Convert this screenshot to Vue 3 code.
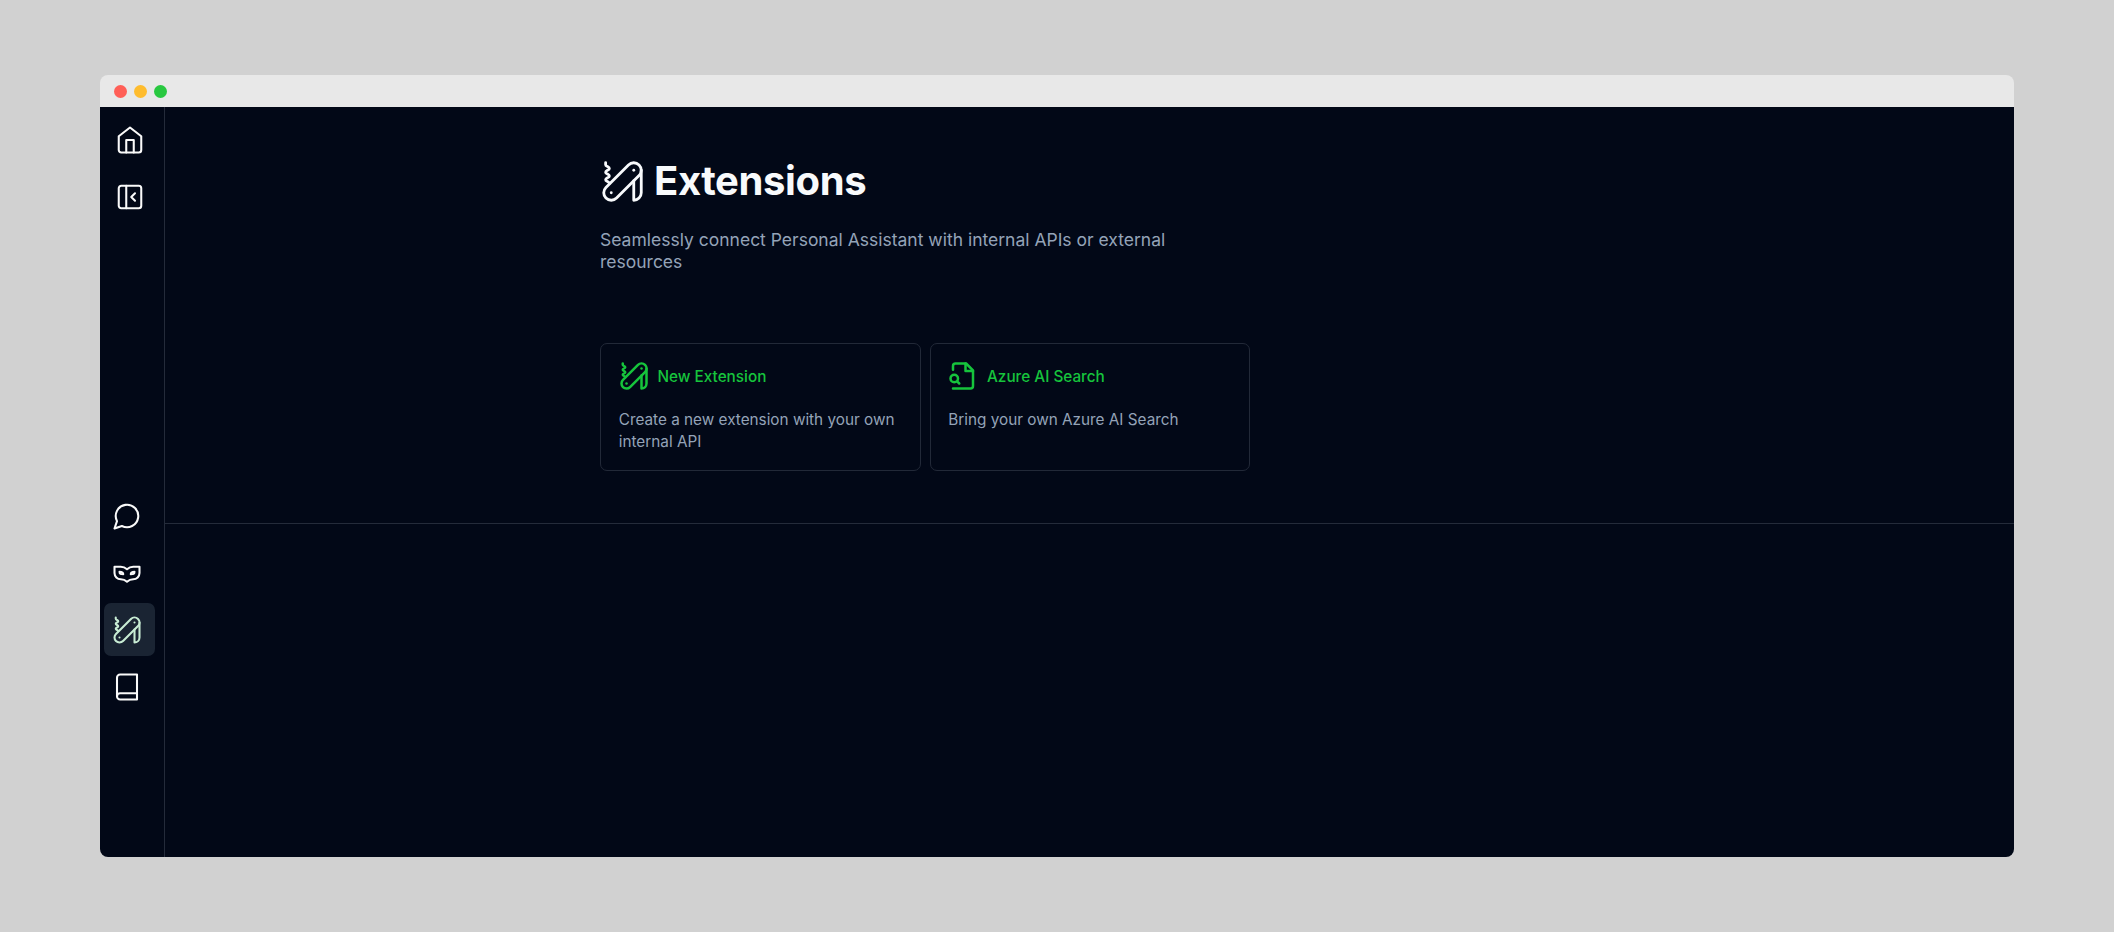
<script setup>
const knife = [
  'M3 2v1c0 1 2 1 2 2S3 6 3 7s2 1 2 2-2 1-2 2 2 1 2 2',
  'M18 6h.01',
  'M6 18h.01',
  'M20.83 8.83a4 4 0 0 0-5.66-5.66l-12 12a4 4 0 1 0 5.66 5.66Z',
  'M18 11.66V22a4 4 0 0 0 4-4V6',
]
const fileSearch = [
  'M4 22h14a2 2 0 0 0 2-2V7.5L14.5 2H6a2 2 0 0 0-2 2v3',
  'M14 2v6h6',
  'M5 17a3 3 0 1 0 0-6 3 3 0 0 0 0 6z',
  'm9 18-1.5-1.5',
]
const topNav = [
  { name: 'Home', paths: ['m3 9 9-7 9 7v11a2 2 0 0 1-2 2H5a2 2 0 0 1-2-2z', 'M9 22V12h6v10'] },
  { name: 'Collapse', paths: ['M5 3h14a2 2 0 0 1 2 2v14a2 2 0 0 1-2 2H5a2 2 0 0 1-2-2V5a2 2 0 0 1 2-2z', 'M9 3v18', 'm16 15-3-3 3-3'] },
]
const mainNav = [
  { name: 'Chat', paths: ['M7.9 20A9 9 0 1 0 4 16.1L2 22Z'] },
  {
    name: 'Persona',
    paths: [
      'M2 12a5 5 0 0 0 5 5 8 8 0 0 1 5 2 8 8 0 0 1 5-2 5 5 0 0 0 5-5V7h-5a8 8 0 0 0-5 2 8 8 0 0 0-5-2H2Z',
      'M6 11c1.5 0 3 .5 3 2-2 0-3 0-3-2Z',
      'M18 11c-1.5 0-3 .5-3 2 2 0 3 0 3-2Z',
    ],
  },
  { name: 'Extensions', paths: knife, active: true },
  { name: 'Prompts', paths: ['M4 19.5v-15A2.5 2.5 0 0 1 6.5 2H20v20H6.5a2.5 2.5 0 0 1 0-5H20'] },
]
const cards = [
  { title: 'New Extension', text: 'Create a new extension with your own internal API', paths: knife },
  { title: 'Azure AI Search', text: 'Bring your own Azure AI Search', paths: fileSearch },
]
</script>

<template>
  <div class="desktop">
    <div class="window">
      <div class="titlebar">
        <span class="dot red"></span>
        <span class="dot yellow"></span>
        <span class="dot green"></span>
      </div>
      <div class="body">
        <nav class="sidebar">
          <div class="group top">
            <a v-for="item in topNav" :key="item.name" class="item" :aria-label="item.name">
              <svg class="icon" viewBox="0 0 24 24"><path v-for="d in item.paths" :key="d" :d="d" /></svg>
            </a>
          </div>
          <div class="group main">
            <a v-for="item in mainNav" :key="item.name" class="item" :class="{ active: item.active }" :aria-label="item.name">
              <svg class="icon" viewBox="0 0 24 24"><path v-for="d in item.paths" :key="d" :d="d" /></svg>
            </a>
          </div>
        </nav>
        <main class="content">
          <header class="hero">
            <div class="inner">
              <h1 class="title">
                <svg class="icon large" viewBox="0 0 24 24"><path v-for="d in knife" :key="d" :d="d" /></svg>
                <span>Extensions</span>
              </h1>
              <p class="subtitle">Seamlessly connect Personal Assistant with internal APIs or external resources</p>
              <div class="cards">
                <article v-for="card in cards" :key="card.title" class="card">
                  <h2 class="card-title">
                    <svg class="icon bold" viewBox="0 0 24 24"><path v-for="d in card.paths" :key="d" :d="d" /></svg>
                    <span>{{ card.title }}</span>
                  </h2>
                  <p class="card-text">{{ card.text }}</p>
                </article>
              </div>
            </div>
          </header>
        </main>
      </div>
    </div>
  </div>
</template>

<style>
body {
  background: #d1d1d1;
}
</style>

<style scoped>
.desktop {
  box-sizing: border-box;
  height: 932px;
  padding: 75px 100px;
  background: #d1d1d1;
  font-family: Inter, 'Liberation Sans', sans-serif;
}
.window {
  display: flex;
  flex-direction: column;
  height: 782px;
}
.titlebar {
  display: flex;
  align-items: center;
  gap: 7px;
  flex: none;
  height: 32px;
  padding: 1px 13.5px 0;
  box-sizing: border-box;
  border-radius: 8px 8px 0 0;
  background: #e8e8e8;
}
.dot {
  width: 13px;
  height: 13px;
  border-radius: 50%;
}
.red { background: #ff5f57; }
.yellow { background: #febc2e; }
.green { background: #28c840; }
.body {
  display: flex;
  flex: 1;
  border-radius: 0 0 8px 8px;
  background: #020817;
}
.sidebar {
  display: flex;
  flex-direction: column;
  flex: none;
  width: 64px;
  border-right: 1px solid #242b3a;
}
.group {
  display: flex;
  flex-direction: column;
  gap: 3.75px;
}
.top {
  padding: 6.5px 0 0 4.5px;
}
.main {
  margin-top: 266.5px;
  padding-left: 4px;
}
.item {
  display: flex;
  align-items: center;
  box-sizing: border-box;
  width: 51px;
  height: 53px;
  padding-left: 8px;
  border-radius: 7px;
  color: #fafafa;
}
.top .item {
  padding-left: 10.5px;
}
.active {
  background: #1a2433;
  color: #c8ecd4;
}
.icon {
  flex: none;
  width: 30px;
  height: 30px;
  fill: none;
  stroke: currentColor;
  stroke-width: 1.65;
  stroke-linecap: round;
  stroke-linejoin: round;
}
.large {
  width: 45px;
  height: 45px;
  stroke-width: 1.5;
}
.bold {
  stroke-width: 2;
}
.content {
  flex: 1;
}
.hero {
  box-sizing: border-box;
  height: 417px;
  padding: 50px 0 0 435px;
  border-bottom: 1px solid #242b3a;
}
.inner {
  width: 650px;
}
.title {
  display: flex;
  align-items: center;
  gap: 9px;
  height: 48px;
  margin: 0;
  color: #f8fafc;
  font-size: 40px;
  font-weight: 700;
  letter-spacing: -0.4px;
  line-height: 48px;
}
.subtitle {
  width: 600px;
  margin: 24px 0 0;
  color: #94a3b8;
  font-size: 17.5px;
  line-height: 22px;
}
.cards {
  display: grid;
  grid-template-columns: 1fr 1fr;
  gap: 9px;
  margin-top: 70px;
}
.card {
  box-sizing: border-box;
  height: 128px;
  padding: 17px 17.75px;
  border: 1px solid #222938;
  border-radius: 7px;
}
.card-title {
  display: flex;
  align-items: center;
  gap: 8.75px;
  height: 30px;
  margin: 0;
  color: #16c43c;
  font-size: 15.3px;
  font-weight: 500;
}
.card-text {
  margin: 18px 0 0;
  color: #94a3b8;
  font-size: 15.3px;
  line-height: 22px;
}
</style>
